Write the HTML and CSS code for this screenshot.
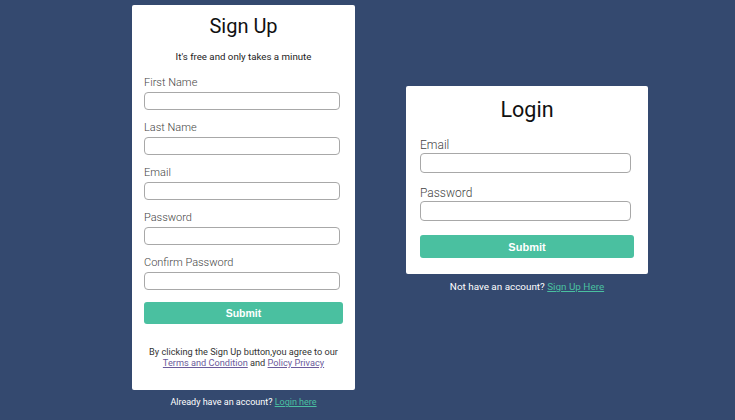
FILE: index.html
```html
<!DOCTYPE html>
<html lang="en">
<head>
<meta charset="utf-8">
<title>Sign Up / Login</title>
<link rel="stylesheet" href="styles.css">
</head>
<body>
<main class="page">
  <section class="column signup-col">
    <form class="card signup">
      <h1 class="title">Sign Up</h1>
      <p class="subtitle">It's free and only takes a minute</p>
      <label class="label">First Name</label>
      <input class="field" type="text">
      <label class="label">Last Name</label>
      <input class="field" type="text">
      <label class="label">Email</label>
      <input class="field" type="email">
      <label class="label">Password</label>
      <input class="field" type="password">
      <label class="label">Confirm Password</label>
      <input class="field" type="password">
      <button class="submit" type="button">Submit</button>
      <p class="terms">By clicking the Sign Up button,you agree to our<br><a class="visited" href="#">Terms and Condition</a> and <a class="visited" href="#">Policy Privacy</a></p>
    </form>
    <p class="below">Already have an account? <a class="teal" href="#">Login here</a></p>
  </section>
  <section class="column login-col">
    <form class="card login">
      <h1 class="title">Login</h1>
      <label class="label">Email</label>
      <input class="field" type="email">
      <label class="label">Password</label>
      <input class="field" type="password">
      <button class="submit" type="button">Submit</button>
    </form>
    <p class="below">Not have an account? <a class="teal" href="#">Sign Up Here</a></p>
  </section>
</main>
</body>
</html>
```
FILE: styles.css
```css
* { box-sizing: border-box; }
html, body { margin: 0; padding: 0; }
body {
  background: #34496f;
  font-family: Roboto, "Liberation Sans", sans-serif;
  width: 735px;
  height: 420px;
  overflow: hidden;
}
.page {
  display: flex;
  align-items: flex-start;
  gap: 51px;
  padding: 5px 0 0 132px;
}
.column { display: flex; flex-direction: column; }
.signup-col { width: 223px; }
.login-col { width: 242px; margin-top: 81px; }
.card {
  background: #fff;
  border-radius: 2px;
  display: flex;
  flex-direction: column;
  margin: 0;
}
.signup { padding: 8px 12px 22px 12px; }
.login { padding: 11px 14px 16px 14px; }
.title {
  margin: 0;
  text-align: center;
  font-weight: 400;
  color: #111;
  font-size: 20px;
  line-height: 26px;
}
.login .title { font-size: 21.5px; }
.subtitle {
  margin: 11px 0 12px;
  text-align: center;
  font-size: 9.7px;
  line-height: 14px;
  color: #222;
}
.label {
  display: block;
  font-size: 11px;
  font-weight: 300;
  line-height: 14px;
  color: #444;
  margin: 0 0 2px;
}
.field {
  display: block;
  width: 196px;
  height: 18px;
  border: 1px solid #a8a8a8;
  border-radius: 4px;
  margin: 0 0 11px;
  padding: 0;
  background: #fff;
}
.login .label { font-size: 12px; margin-bottom: 1px; }
.login .title + .label { margin-top: 15px; }
.login .field { width: 211px; height: 20px; margin-bottom: 13px; }
.submit {
  display: block;
  width: 100%;
  height: 22px;
  margin-top: 1px;
  border: none;
  border-radius: 3px;
  background: #4ac0a0;
  color: #fff;
  font-family: "Liberation Sans", Arial, sans-serif;
  font-weight: 700;
  font-size: 10.5px;
  padding: 0;
}
.login .submit { height: 23px; font-size: 11px; }
.terms {
  margin: 22px 0 0;
  text-align: center;
  font-size: 9.2px;
  font-weight: 400;
  line-height: 11px;
  color: #333;
}
.visited { color: #6b5b9b; }
.below {
  margin: 5px 0 0;
  text-align: center;
  font-size: 9px;
  line-height: 14px;
  color: #fff;
}
.login-col .below { margin-top: 6px; font-size: 9.9px; }
.teal { color: #4ac0a0; }
```
